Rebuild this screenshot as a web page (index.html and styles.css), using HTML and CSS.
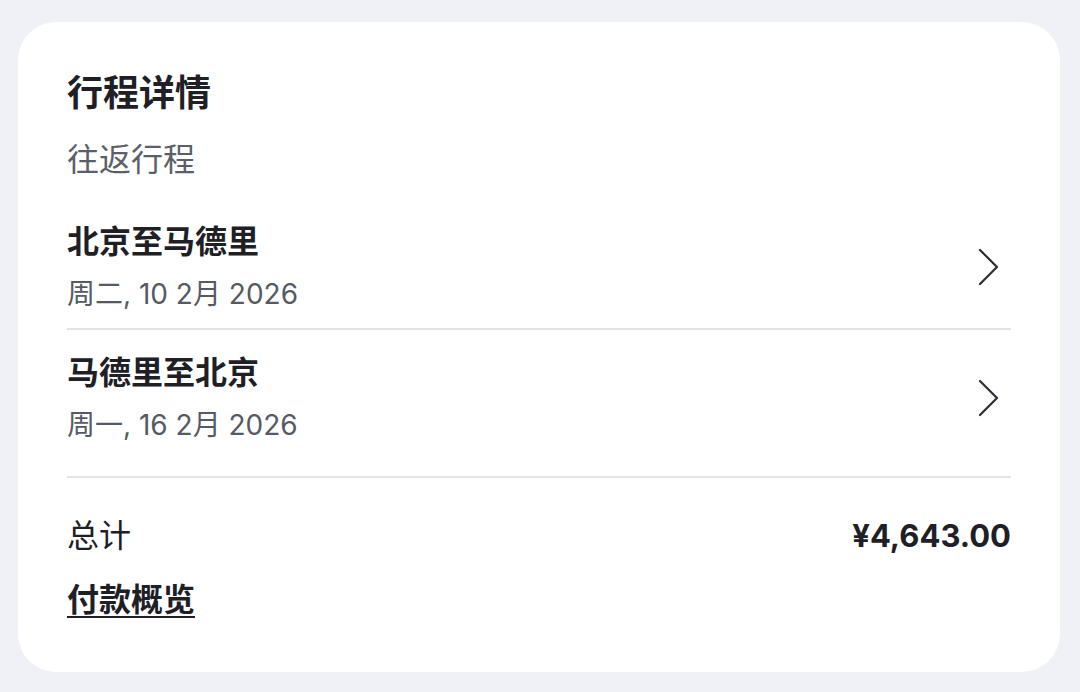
FILE: index.html
```html
<!DOCTYPE html>
<html lang="zh-CN">
<head>
<meta charset="utf-8">
<link rel="stylesheet" href="styles.css">
</head>
<body>
<div class="card">
  <h1 class="title">行程详情</h1>
  <div class="subtitle">往返行程</div>
  <div class="leg leg-first">
    <div class="leg-text">
      <div class="leg-name">北京至马德里</div>
      <div class="leg-date">周二, 10 2月 2026</div>
    </div>
    <svg class="chev" width="24" height="38" viewBox="0 0 24 38"><path d="M3 2 L20 19 L3 36" fill="none" stroke="#2a2d33" stroke-width="2.2" stroke-linecap="round" stroke-linejoin="round"/></svg>
  </div>
  <div class="leg leg-last">
    <div class="leg-text">
      <div class="leg-name">马德里至北京</div>
      <div class="leg-date">周一, 16 2月 2026</div>
    </div>
    <svg class="chev" width="24" height="38" viewBox="0 0 24 38"><path d="M3 2 L20 19 L3 36" fill="none" stroke="#2a2d33" stroke-width="2.2" stroke-linecap="round" stroke-linejoin="round"/></svg>
  </div>
  <div class="total">
    <span class="total-label">总计</span>
    <span class="total-amount">¥4,643.00</span>
  </div>
  <a class="overview" href="#">付款概览</a>
</div>
</body>
</html>
```
FILE: styles.css
```css
html, body {
  margin: 0;
  padding: 0;
  background: #f0f1f7;
}
body {
  padding: 22px 20px 20px 18px;
  font-family: Inter, "Noto Sans CJK SC", sans-serif;
  color: #1e2026;
}
.card {
  background: #ffffff;
  border-radius: 38px;
  padding: 49px 49px 40px 49px;
  height: 650px;
  box-sizing: border-box;
}
.title {
  margin: 0;
  font-size: 36px;
  line-height: 44px;
  font-weight: 700;
  color: #1e2026;
}
.subtitle {
  margin-top: 25px;
  font-size: 32px;
  line-height: 40px;
  color: #5a5f69;
}
.leg {
  display: flex;
  align-items: center;
  justify-content: space-between;
  border-bottom: 2px solid #e3e4ea;
}
.leg-first {
  padding: 42px 0 16px 0;
}
.leg-last {
  padding: 23px 0 33px 0;
}
.leg-name {
  font-size: 32px;
  line-height: 40px;
  font-weight: 700;
  color: #1e2026;
}
.leg-date {
  margin-top: 14px;
  font-size: 28px;
  line-height: 36px;
  color: #555a64;
}
.chev {
  margin-right: 10px;
  display: block;
}
.total {
  display: flex;
  justify-content: space-between;
  align-items: center;
  margin-top: 38px;
}
.total-label {
  font-size: 32px;
  line-height: 40px;
  color: #1e2026;
}
.total-amount {
  font-size: 31px;
  line-height: 40px;
  font-weight: 700;
  color: #1e2026;
}
.overview {
  display: inline-block;
  margin-top: 24px;
  font-size: 32px;
  line-height: 40px;
  font-weight: 700;
  color: #1e2026;
  text-decoration: underline;
  text-decoration-thickness: 2px;
  text-underline-offset: 5px;
}
```
